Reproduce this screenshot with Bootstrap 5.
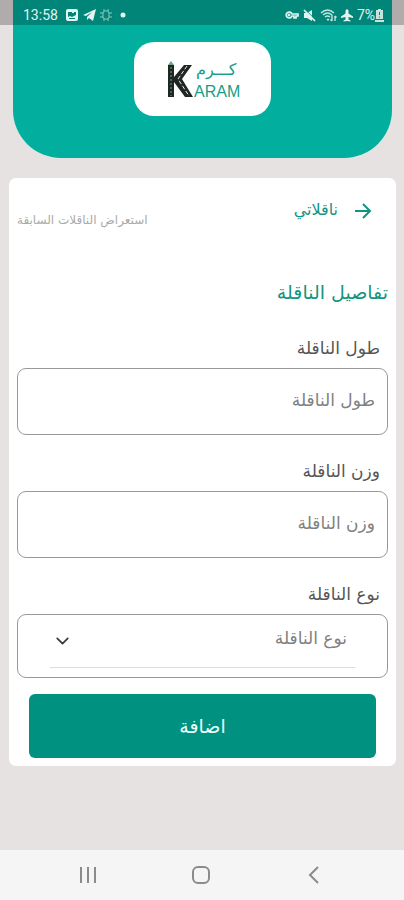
<!DOCTYPE html>
<html lang="ar" dir="rtl">
<head>
<meta charset="utf-8">
<meta name="viewport" content="width=device-width, initial-scale=1">
<title>تفاصيل الناقلة</title>
<link href="https://cdn.jsdelivr.net/npm/bootstrap@5.3.0/dist/css/bootstrap.min.css" rel="stylesheet">
<style>
body { background: #e6e2e1; font-family: "DejaVu Sans", sans-serif; color: #555; }
.status-bar { background: rgba(0, 0, 0, .24); color: #e3f3f0; height: 25px; padding: 5px 20px 0 23px; font: 14px/20px Roboto, sans-serif; }
.brand-header { background: #02af9f; margin: 0 12px 0 13px; padding: 42px 0; border-radius: 0 0 48px 48px; }
.brand-box { width: 137px; height: 74px; border-radius: 20px; }
.form-panel { margin: 20px 8px 0 9px; border-radius: 7px; padding: 20px 8px 8px; }
.green-link { color: #12957f; font-size: 16px; line-height: 24px; }
.history-link { color: #aaa; font-size: 12px; line-height: 20px; margin-top: 12px; }
.panel-title { color: #12957f; font-size: 19px; line-height: 36px; margin: 44px 0 0; }
.field-label { font-size: 17px; line-height: 24px; margin: 0 8px 8px; }
.field-group { margin-top: 24px; }
.panel-title + form { padding-top: 2px; }
.field-box, .field-box:focus { border: 1px solid #999; border-radius: 9px; background: #fff; }
input.field-box { height: 67px; padding: 0 12px 4px; font-size: 17px; color: #777; }
input.field-box::placeholder { color: #808080; }
.select-box { height: 64px; padding: 0 32px; }
.type-select { border: 0; border-bottom: 1px solid #ddd; border-radius: 0; height: 53px; padding: 0 8px 4px 32px; font-size: 17px; color: #808080; background-color: transparent; background-position: left 5px center; background-size: 15px 14px; }
.submit-btn, .submit-btn:hover { background: #019181; color: #e8fffa; height: 64px; border-radius: 6px; font-size: 19px; }
.submit-row { padding: 16px 12px 0; }
.system-nav { background: #f5f5f5; height: 50px; padding: 0 77px 0 75px; }
</style>
</head>
<body class="d-flex flex-column min-vh-100">
<div class="position-relative">
  <div class="status-bar position-absolute top-0 start-0 w-100 d-flex justify-content-between" dir="ltr">
    <div class="d-flex align-items-center">
      <span>13:58</span>
      <svg class="ms-2" width="12" height="12" viewBox="0 0 12 12"><path fill="#e3f3f0" fill-rule="evenodd" d="M2 0h8q2 0 2 2v8q0 2-2 2H2q-2 0-2-2V2Q0 0 2 0ZM2 3v5l2-1 2 1 4-2V3H8v1H6V3ZM3 9v1h6V9Z"/></svg>
      <svg class="ms-1" width="14" height="14" viewBox="0 0 14 14"><path fill="#e3f3f0" d="M1 7 14 1l-3 12-4-3-2 2V9l5-5-6 4Z"/></svg>
      <svg class="ms-1" width="12" height="14" viewBox="0 0 12 14" fill="none" stroke="#8fc9c0"><rect x="3" y="3" width="6" height="8" rx="2"/><path d="M4 1v2M8 1v2M4 11v2M8 11v2M0 5h3M9 5h3M0 9h3M9 9h3"/></svg>
      <svg class="ms-2" width="6" height="6" viewBox="0 0 6 6"><circle cx="3" cy="3" r="2.5" fill="#e3f3f0"/></svg>
    </div>
    <div class="d-flex align-items-center">
      <svg width="14" height="10" viewBox="0 0 14 10" fill="none" stroke="#e3f3f0" stroke-width="1.7"><path d="M7 4a3 3 0 1 0 0 2h2v2h2V6h2V4Z"/><circle cx="4" cy="5" r=".6"/></svg>
      <svg class="ms-1" width="13" height="13" viewBox="0 0 13 13"><path fill="#e3f3f0" d="M1 4h3l5-3v11L4 9H1Z"/><path stroke="#078577" d="m2.500.8 10 10"/><path stroke="#e3f3f0" stroke-width="1.700" d="m1 1 11 11"/></svg>
      <svg class="ms-1" width="17" height="14" viewBox="0 0 17 14" fill="none" stroke="#c4e5df" stroke-width="1.4"><path d="M1 5q6.500-6 13 0M3 7q4.500-4 9 0M5 9q2.500-2 5 0"/><path d="m7 11 1 1 1-1M12 7v6m-1.500-1.500L12 13m3 0V8m0 0 1.500 1.500"/></svg>
      <svg class="ms-1" width="12" height="13" viewBox="0 0 12 13"><path fill="#e3f3f0" d="M4.500 1.500q1.500-2.500 3 0v3L12 7.500V9L7.500 8v2.500l2 1v1L6 12l-3.500.5v-1l2-1V8L0 9V7.500l4.500-3Z"/></svg>
      <span class="ms-1">7%</span>
      <svg width="9" height="13" viewBox="0 0 9 13"><path fill="#c4e5df" d="M3 0h3v1h2v9H1V1h2ZM0 11h9v2H0Z"/><path stroke="#078577" d="M4.500 3v3M4.500 7.500v1"/></svg>
    </div>
  </div>
  <header class="brand-header">
    <div class="brand-box bg-white mx-auto d-flex align-items-center justify-content-center">
      <svg width="74" height="40" viewBox="0 0 74 40" direction="ltr" role="img" aria-label="KARAM كرم">
        <path fill="#202624" d="M2 6h6v32H2ZM18 6h8L16 20l11 18h-8L8 23v-5Z"/>
        <path fill="#67aa80" d="m5 2 3 4H2Z"/>
        <path stroke="#62a98e" stroke-dasharray="2 2" d="M5 8v29"/>
        <path stroke="#eee" stroke-dasharray="4 2" fill="none" d="M21 7 12 20l11 17"/>
        <text x="28" y="38" font-family="Liberation Sans, sans-serif" font-size="16" fill="#199c87">ARAM</text>
        <text x="30" y="16" font-family="DejaVu Sans, sans-serif" font-size="16" fill="#199c87">كـــرم</text>
      </svg>
    </div>
  </header>
</div>
<main class="form-panel bg-white">
  <div class="d-flex justify-content-between align-items-start">
    <a href="#" class="green-link text-decoration-none d-flex align-items-center pe-3">
      <svg width="18" height="18" viewBox="0 0 18 18" fill="none" stroke="#12957f" stroke-width="2"><path d="M1 10h15M9 3l7 7-7 7"/></svg>
      <span class="me-3">ناقلاتي</span>
    </a>
    <a href="#" class="history-link text-decoration-none">استعراض الناقلات السابقة</a>
  </div>
  <h1 class="panel-title fw-normal">تفاصيل الناقلة</h1>
  <form>
    <div class="field-group">
      <label class="field-label d-block" for="length">طول الناقلة</label>
      <input class="form-control field-box" id="length" type="text" placeholder="طول الناقلة">
    </div>
    <div class="field-group">
      <label class="field-label d-block" for="weight">وزن الناقلة</label>
      <input class="form-control field-box" id="weight" type="text" placeholder="وزن الناقلة">
    </div>
    <div class="field-group">
      <label class="field-label d-block" for="type">نوع الناقلة</label>
      <div class="field-box select-box">
        <select class="form-select type-select" id="type"><option>نوع الناقلة</option></select>
      </div>
    </div>
    <div class="submit-row">
      <button class="btn submit-btn w-100" type="button">اضافة</button>
    </div>
  </form>
</main>
<nav class="system-nav mt-auto d-flex justify-content-between align-items-center" dir="ltr">
  <button class="btn p-0 border-0 d-flex" type="button" aria-label="Recents"><svg width="26" height="20" viewBox="0 0 26 20"><path stroke="#8b8b8b" stroke-width="2" d="M6 2v16M13 2v16M20 2v16"/></svg></button>
  <button class="btn p-0 border-0 d-flex" type="button" aria-label="Home"><svg width="26" height="20" viewBox="0 0 26 20"><rect x="5" y="2" width="16" height="16" rx="5" fill="none" stroke="#8b8b8b" stroke-width="2"/></svg></button>
  <button class="btn p-0 border-0 d-flex" type="button" aria-label="Back"><svg width="26" height="20" viewBox="0 0 26 20"><path fill="none" stroke="#8b8b8b" stroke-width="2" d="m17 2-8 8 8 8"/></svg></button>
</nav>
<script src="https://cdn.jsdelivr.net/npm/bootstrap@5.3.0/dist/js/bootstrap.bundle.min.js"></script>
</body>
</html>
